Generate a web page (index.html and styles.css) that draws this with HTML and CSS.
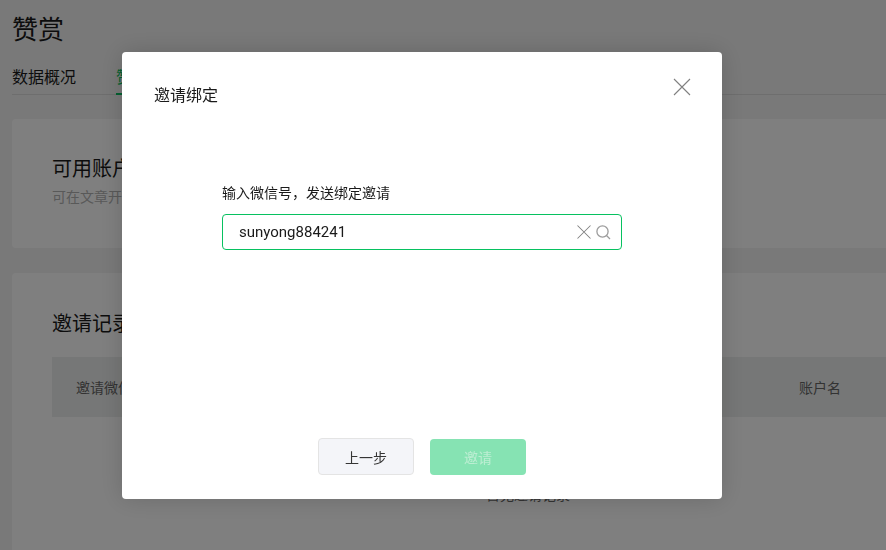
FILE: index.html
```html
<!DOCTYPE html>
<html lang="zh-CN">
<head>
<meta charset="utf-8">
<title>赞赏</title>
<link rel="stylesheet" href="styles.css">
</head>
<body>
<div class="page">
  <h1 class="page-title">赞赏</h1>
  <nav class="tabs">
    <a class="tab">数据概况</a>
    <a class="tab tab-active">赞赏账户</a>
  </nav>
  <section class="card card-balance">
    <h2 class="card-title">可用账户</h2>
    <p class="card-desc">可在文章开启赞赏时选择</p>
  </section>
  <section class="card card-records">
    <h2 class="card-title">邀请记录</h2>
    <div class="table-head">
      <span>邀请微信号</span>
      <span>账户名</span>
    </div>
    <p class="empty">暂无邀请记录</p>
  </section>
</div>
<div class="overlay">
  <div class="modal">
    <header class="modal-head">
      <h3 class="modal-title">邀请绑定</h3>
      <svg class="modal-close" viewBox="0 0 18 18" width="18" height="18"><path d="M1 1l16 16M17 1L1 17"/></svg>
    </header>
    <div class="modal-body">
      <label class="field-label">输入微信号，发送绑定邀请</label>
      <div class="search">
        <span class="search-value">sunyong884241</span>
        <svg class="icon-clear" viewBox="0 0 14 14" width="14" height="14"><path d="M.5.5l13 13M13.5.5l-13 13"/></svg>
        <svg class="icon-search" viewBox="0 0 15 15" width="15" height="15"><circle cx="6.5" cy="6.5" r="5.6"/><path d="M10.5 10.5l3.5 3.5"/></svg>
      </div>
    </div>
    <footer class="modal-foot">
      <button class="btn btn-default">上一步</button>
      <button class="btn btn-primary">邀请</button>
    </footer>
  </div>
</div>
</body>
</html>
```
FILE: styles.css
```css
* { box-sizing: border-box; }
html, body { margin: 0; height: 100%; overflow: hidden; }
body {
  background: #f3f3f3;
  color: #1a1a1a;
  font-family: "Noto Sans", "Noto Sans CJK SC", sans-serif;
}
.page { padding: 12px 0 0 12px; }
.page-title { margin: 0; font-size: 26px; line-height: 34px; font-weight: 400; }
.tabs {
  display: flex;
  gap: 40px;
  margin-top: 15px;
  border-bottom: 1px solid #dcdcdc;
  height: 34px;
}
.tab { font-size: 16px; line-height: 32px; height: 34px; }
.tab-active { color: #07c160; border-bottom: 2px solid #07c160; }
.card { background: #fff; border-radius: 4px 0 0 4px; padding-left: 40px; }
.card-balance { margin-top: 24px; height: 129px; padding-top: 35px; }
.card-records { margin-top: 25px; height: 300px; padding-top: 36px; }
.card-title { margin: 0; font-size: 20px; line-height: 30px; font-weight: 400; }
.card-desc { margin: 2px 0 0; font-size: 14px; line-height: 22px; color: #b2b2b2; }
.table-head {
  display: grid;
  grid-template-columns: 723px 1fr;
  align-items: center;
  margin-top: 18px;
  height: 60px;
  padding-left: 24px;
  background: #edefee;
  font-size: 14px;
  color: #666;
}
.empty { margin: 68px 0 0; padding-left: 118px; text-align: center; font-size: 14px; line-height: 20px; color: #666; }
.overlay {
  position: fixed;
  inset: 0;
  background: rgba(0, 0, 0, .5);
  display: flex;
  align-items: flex-start;
  justify-content: center;
  padding: 52px 42px 0 0;
}
.modal {
  width: 600px;
  height: 447px;
  background: #fff;
  border-radius: 4px;
  box-shadow: 0 0 24px rgba(0, 0, 0, .16);
  display: flex;
  flex-direction: column;
}
.modal-head {
  display: flex;
  justify-content: space-between;
  align-items: flex-start;
  padding: 26px 31px 0 32px;
}
.modal-title { margin: 0; font-size: 16px; line-height: 34px; font-weight: 400; }
.modal-close { fill: none; stroke: #808080; stroke-width: 1.1; }
.modal-body { flex: 1; padding: 70px 100px 0; }
.field-label { display: block; font-size: 14px; line-height: 22px; color: #1a1a1a; }
.search {
  display: flex;
  align-items: center;
  height: 36px;
  margin-top: 10px;
  padding: 0 10px 0 16px;
  border: 1px solid #07c160;
  border-radius: 4px;
}
.search-value { flex: 1; font-family: Roboto, "Noto Sans CJK SC", sans-serif; font-size: 15px; color: #1a1a1a; }
.icon-clear { fill: none; stroke: #808080; stroke-width: 1.05; }
.icon-search { margin-left: 5px; fill: none; stroke: #9c9c9c; stroke-width: 1.3; }
.modal-foot {
  display: flex;
  align-items: flex-end;
  justify-content: center;
  gap: 16px;
  padding-bottom: 24px;
}
.btn {
  width: 96px;
  height: 36px;
  font: inherit;
  font-size: 14px;
  border-radius: 4px;
  padding: 0;
}
.btn-default { height: 37px; background: #f4f5f9; border: 1px solid #e4e4e4; color: #353535; }
.btn-primary { background: #86e3b3; border: 0; color: #bdeed3; }
```
